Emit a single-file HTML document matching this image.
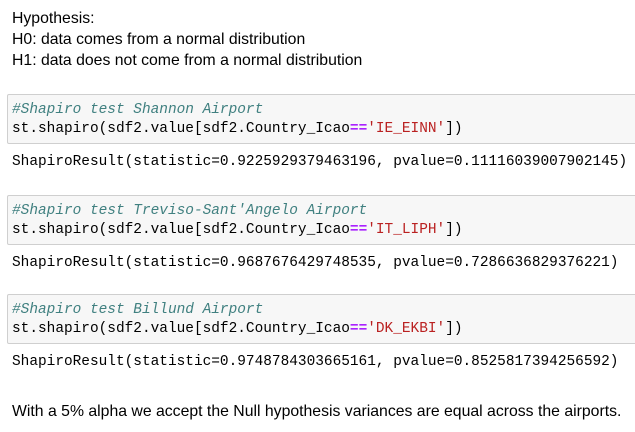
<html><head><style>
body{margin:0;background:#fff;width:635px;height:432px;overflow:hidden;position:relative;font-family:"Liberation Sans",sans-serif;}
.t{position:absolute;left:12px;font-size:15.8px;color:#000;line-height:20px;white-space:nowrap;}
.box{position:absolute;left:7px;width:640px;height:50px;background:#f7f7f7;border:1px solid #cfcfcf;border-radius:2px;box-sizing:border-box;}
.m{position:absolute;left:12px;font-family:"Liberation Mono",monospace;font-size:14.45px;line-height:19px;white-space:pre;color:#000;}
.c{color:#408080;font-style:italic}.s{color:#BA2121}.o{color:#AA22FF;font-weight:bold}
</style></head><body>
<div class="t" style="top:9px">Hypothesis:</div>
<div class="t" style="top:30px">H0: data comes from a normal distribution</div>
<div class="t" style="top:51px">H1: data does not come from a normal distribution</div>

<div class="box" style="top:94px"></div>
<div class="m" style="top:101px"><span class="c">#Shapiro test Shannon Airport</span>
st.shapiro(sdf2.value[sdf2.Country_Icao<span class="o">==</span><span class="s">'IE_EINN'</span>])</div>
<div class="m" style="top:153px">ShapiroResult(statistic=0.9225929379463196, pvalue=0.11116039007902145)</div>

<div class="box" style="top:195px"></div>
<div class="m" style="top:202px"><span class="c">#Shapiro test Treviso-Sant'Angelo Airport</span>
st.shapiro(sdf2.value[sdf2.Country_Icao<span class="o">==</span><span class="s">'IT_LIPH'</span>])</div>
<div class="m" style="top:254px">ShapiroResult(statistic=0.9687676429748535, pvalue=0.7286636829376221)</div>

<div class="box" style="top:294px"></div>
<div class="m" style="top:301px"><span class="c">#Shapiro test Billund Airport</span>
st.shapiro(sdf2.value[sdf2.Country_Icao<span class="o">==</span><span class="s">'DK_EKBI'</span>])</div>
<div class="m" style="top:353px">ShapiroResult(statistic=0.9748784303665161, pvalue=0.8525817394256592)</div>

<div class="t" style="top:402px">With a 5% alpha we accept the Null hypothesis variances are equal across the airports.</div>
</body></html>
